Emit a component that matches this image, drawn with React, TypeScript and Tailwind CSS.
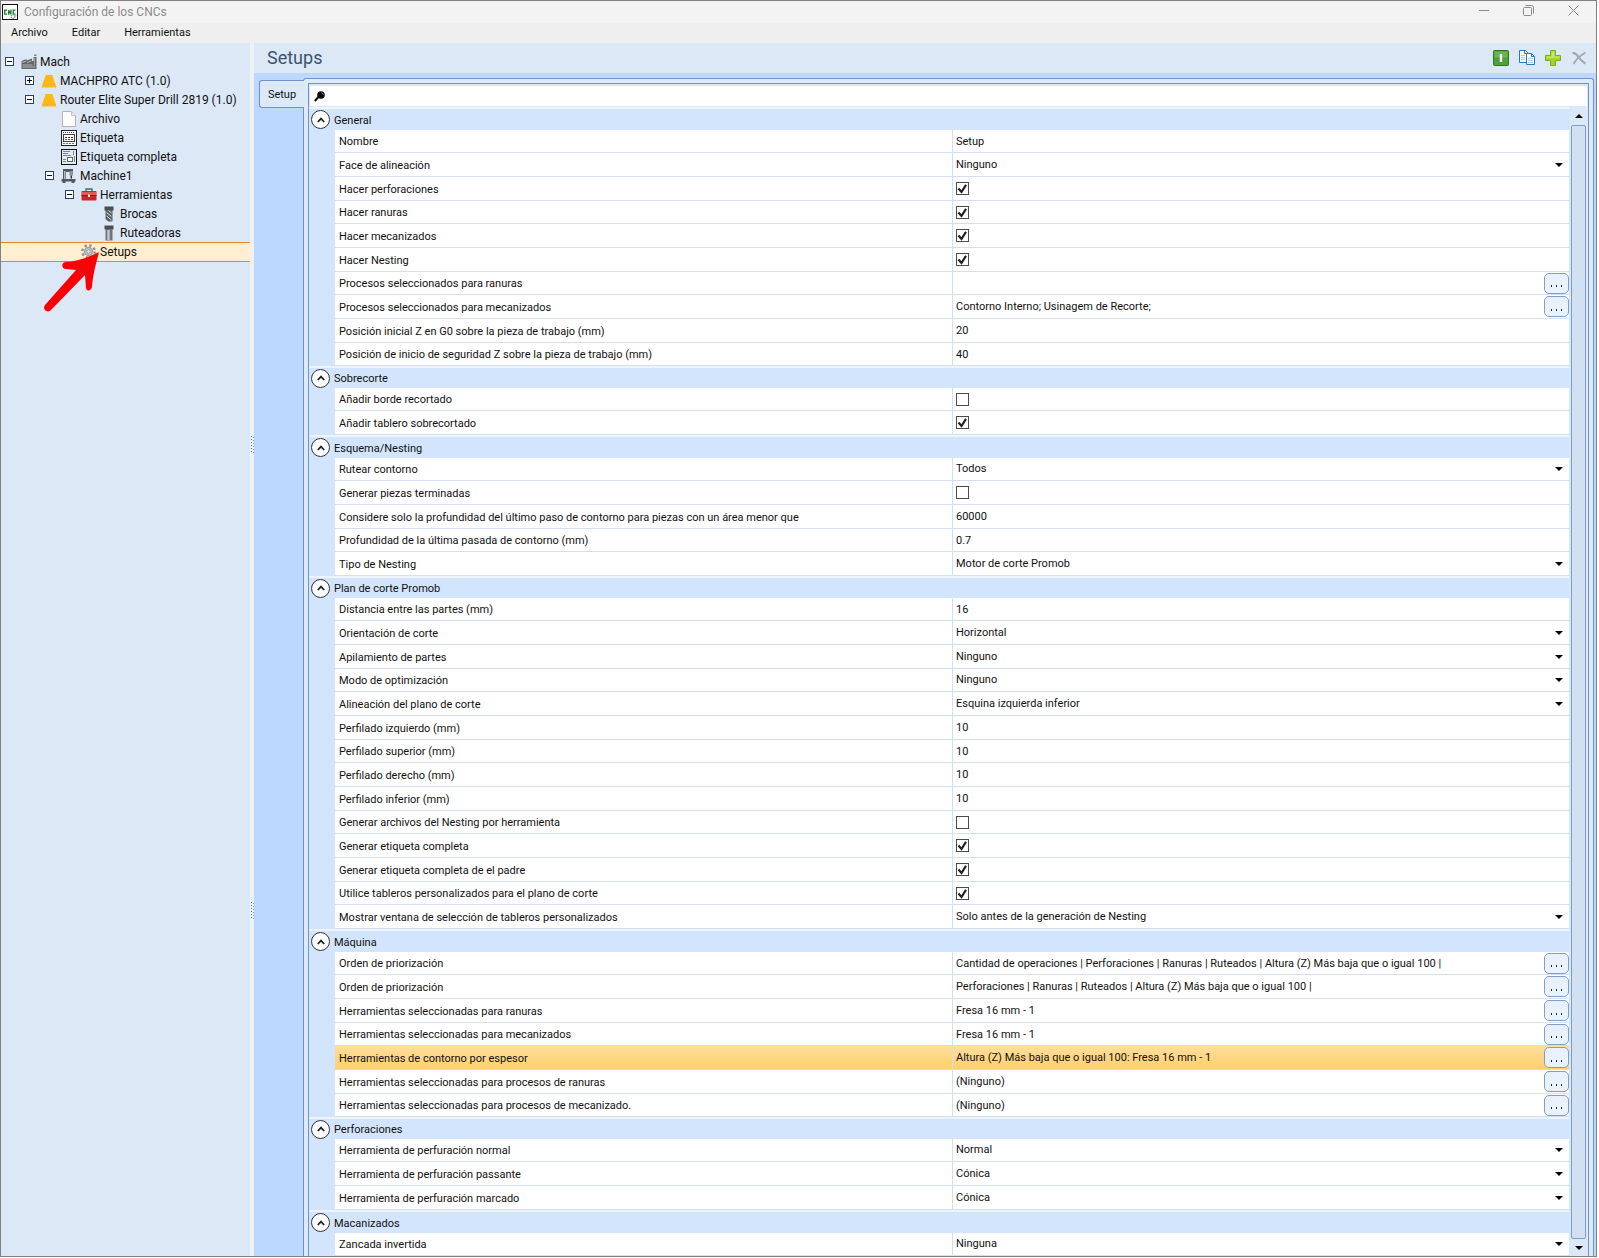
import React, { useState } from "react";

type Kind = "text" | "select" | "check" | "dots";
type Row = { label: string; kind: Kind; value?: string; on?: boolean; hot?: boolean };
type Group = { title: string; rows: Row[] };

const text = (label: string, value: string): Row => ({ label, kind: "text", value });
const pick = (label: string, value: string): Row => ({ label, kind: "select", value });
const check = (label: string, on: boolean): Row => ({ label, kind: "check", on });
const dots = (label: string, value: string, hot = false): Row => ({ label, kind: "dots", value, hot });

const groups: Group[] = [
  {
    title: "General",
    rows: [
      text("Nombre", "Setup"),
      pick("Face de alineación", "Ninguno"),
      check("Hacer perforaciones", true),
      check("Hacer ranuras", true),
      check("Hacer mecanizados", true),
      check("Hacer Nesting", true),
      dots("Procesos seleccionados para ranuras", ""),
      dots("Procesos seleccionados para mecanizados", "Contorno Interno; Usinagem de Recorte;"),
      text("Posición inicial Z en G0 sobre la pieza de trabajo (mm)", "20"),
      text("Posición de inicio de seguridad Z sobre la pieza de trabajo (mm)", "40"),
    ],
  },
  {
    title: "Sobrecorte",
    rows: [check("Añadir borde recortado", false), check("Añadir tablero sobrecortado", true)],
  },
  {
    title: "Esquema/Nesting",
    rows: [
      pick("Rutear contorno", "Todos"),
      check("Generar piezas terminadas", false),
      text("Considere solo la profundidad del último paso de contorno para piezas con un área menor que", "60000"),
      text("Profundidad de la última pasada de contorno (mm)", "0.7"),
      pick("Tipo de Nesting", "Motor de corte Promob"),
    ],
  },
  {
    title: "Plan de corte Promob",
    rows: [
      text("Distancia entre las partes (mm)", "16"),
      pick("Orientación de corte", "Horizontal"),
      pick("Apilamiento de partes", "Ninguno"),
      pick("Modo de optimización", "Ninguno"),
      pick("Alineación del plano de corte", "Esquina izquierda inferior"),
      text("Perfilado izquierdo (mm)", "10"),
      text("Perfilado superior (mm)", "10"),
      text("Perfilado derecho (mm)", "10"),
      text("Perfilado inferior (mm)", "10"),
      check("Generar archivos del Nesting por herramienta", false),
      check("Generar etiqueta completa", true),
      check("Generar etiqueta completa de el padre", true),
      check("Utilice tableros personalizados para el plano de corte", true),
      pick("Mostrar ventana de selección de tableros personalizados", "Solo antes de la generación de Nesting"),
    ],
  },
  {
    title: "Máquina",
    rows: [
      dots("Orden de priorización", "Cantidad de operaciones | Perforaciones | Ranuras | Ruteados | Altura (Z) Más baja que o igual 100 |"),
      dots("Orden de priorización", "Perforaciones | Ranuras | Ruteados | Altura (Z) Más baja que o igual 100 |"),
      dots("Herramientas seleccionadas para ranuras", "Fresa 16 mm - 1"),
      dots("Herramientas seleccionadas para mecanizados", "Fresa 16 mm - 1"),
      dots("Herramientas de contorno por espesor", "Altura (Z) Más baja que o igual 100: Fresa 16 mm - 1", true),
      dots("Herramientas seleccionadas para procesos de ranuras", "(Ninguno)"),
      dots("Herramientas seleccionadas para procesos de mecanizado.", "(Ninguno)"),
    ],
  },
  {
    title: "Perforaciones",
    rows: [
      pick("Herramienta de perfuración normal", "Normal"),
      pick("Herramienta de perfuración passante", "Cónica"),
      pick("Herramienta de perfuración marcado", "Cónica"),
    ],
  },
  { title: "Macanizados", rows: [pick("Zancada invertida", "Ninguna")] },
];

/* ---------- icons ---------- */

function AppIcon() {
  return (
    <svg className="size-4" viewBox="0 0 16 16" aria-hidden="true">
      <rect x="0.5" y="0.5" width="15" height="15" fill="#fff" stroke="#111" />
      <path d="M5 6.200H2.700v4H5M6.700 10.800V6.200l2.200 4V5.500M13.500 6.200h-2.300v4h2.300" fill="none" stroke="#1a7a2e" strokeWidth="1.300" />
      <circle cx="11" cy="12.500" r="1.800" fill="none" stroke="#8f9396" strokeWidth="1.400" strokeDasharray="1.200 0.600" />
      <circle cx="13.200" cy="11.800" r="1.200" fill="#b8bbbd" />
    </svg>
  );
}

function FactoryIcon() {
  return (
    <svg className="size-4" viewBox="0 0 16 16" aria-hidden="true">
      <path d="M0.500 15V7L5.500 5v1.500L11 4.500V7h1.500V3h3v12z" fill="#63676a" />
      <path d="M13 0.500h2.500V2H13z" fill="#85898c" />
      <path d="M1 8.500l4-1.500M6 8.500l4.500-1.500M1.500 11h10M1.500 13h13" stroke="#b4b8bb" />
      <path d="M13.500 3.500v8" stroke="#a0a4a7" />
    </svg>
  );
}

function ConeIcon() {
  return (
    <svg className="size-4" viewBox="0 0 16 16" aria-hidden="true">
      <path d="M4.500 2.500Q4.700 2 5.200 2h5.600Q11.300 2 11.500 2.500L15.500 14.500H0.500z" fill="#fdb813" />
    </svg>
  );
}

function PageIcon() {
  return (
    <svg className="size-4" viewBox="0 0 16 16" aria-hidden="true">
      <path d="M1.500 0.500h9L14.500 4.500v11h-13z" fill="#fcfcfc" stroke="#b3b5b8" />
      <path d="M10.500 0.500v4h4" fill="#e8e8e8" stroke="#c3c5c8" />
    </svg>
  );
}

function TagIcon() {
  return (
    <svg className="size-4" viewBox="0 0 16 16" aria-hidden="true">
      <rect x="0.500" y="0.500" width="15" height="15" fill="#fff" stroke="#222" />
      <path d="M2 2.500h12" stroke="#555" strokeWidth="1" strokeDasharray="1 1" />
      <path d="M2 13.500h12" stroke="#b85450" strokeWidth="1" strokeDasharray="2 1" />
      <rect x="2.500" y="4.500" width="11" height="7" fill="#fff" stroke="#444" />
      <path d="M4 7.500h8" stroke="#333" strokeWidth="1" strokeDasharray="2 1" />
      <path d="M4 9.500h8" stroke="#555" strokeWidth="1" strokeDasharray="2 1" />
    </svg>
  );
}

function FullTagIcon() {
  return (
    <svg className="size-4" viewBox="0 0 16 16" aria-hidden="true">
      <rect x="0.500" y="0.500" width="15" height="15" fill="#e3ebf2" stroke="#111" />
      <path d="M2 2.500h7M2 4.500h5M2 6.500h8M2 10.500h3M2 12.500h3M12.500 2v4" stroke="#7c8690" />
      <rect x="6.500" y="8.500" width="5" height="4" fill="#fff" stroke="#5d6871" />
      <path d="M13.500 7v6" stroke="#7c8690" />
    </svg>
  );
}

function MachineIcon() {
  return (
    <svg className="size-4" viewBox="0 0 16 16" aria-hidden="true">
      <path d="M2 1h10v3H5v8H2z" fill="#54585c" />
      <path d="M3 3h1.500v8H3z" fill="#b5babf" />
      <path d="M8.500 3h3.500v4.500H8.500z" fill="#8d9296" />
      <path d="M9.500 7.500h1.500V10.500h-1.500z" fill="#333" />
      <path d="M0.500 11h14v2.500h-14zM1.500 13.500h3V15h-3zM10.500 13.500h3V15h-3z" fill="#54585c" />
    </svg>
  );
}

function ToolboxIcon() {
  return (
    <svg className="size-4" viewBox="0 0 16 16" aria-hidden="true">
      <path d="M5 4.500V2h6v2.500" fill="none" stroke="#5b5f63" strokeWidth="1.300" />
      <rect x="0.500" y="4" width="15" height="9.500" rx="1" fill="#c62828" />
      <path d="M1 5h14v3H1z" fill="#e35a50" />
      <path d="M0.500 8.500h15" stroke="#8e1616" />
      <path d="M7 7.500h2v2.500H7z" fill="#f0f0f0" />
    </svg>
  );
}

function DrillIcon({ plain = false }: { plain?: boolean }) {
  return (
    <svg className="size-4" viewBox="0 0 16 16" aria-hidden="true">
      <path d="M3.500 0.500h9v4h-9z" fill="#4b4f53" />
      <path d={plain ? "M4.500 4h7v11.500h-7z" : "M4.500 4h7v11.500H7.500L4.500 13z"} fill={plain ? "#6f7478" : "#5b6064"} />
      {plain ? (
        <path d="M7.500 5v10" stroke="#bfc4c8" strokeWidth="2.500" />
      ) : (
        <path d="M5.500 6.500l5 4M5.500 10l5 4M7.500 4.500l3 2.500" stroke="#dfe3e6" />
      )}
    </svg>
  );
}

function GearIcon() {
  return (
    <svg className="size-4" viewBox="0 0 16 16" aria-hidden="true">
      <circle cx="7.500" cy="7.500" r="6.200" fill="none" stroke="#8f9397" strokeWidth="2.400" strokeDasharray="2.400 2.470" />
      <circle cx="7.500" cy="7.500" r="4" fill="#c9ccce" stroke="#9da1a5" strokeWidth="1.500" />
      <circle cx="7.500" cy="7.500" r="1.800" fill="#fdeccf" stroke="#8f9397" />
    </svg>
  );
}

function Expander({ open }: { open: boolean }) {
  return (
    <svg className="size-[9px]" viewBox="0 0 9 9" aria-hidden="true">
      <rect x="0.500" y="0.500" width="8" height="8" fill="#fff" stroke="#2b3f63" />
      <path d={open ? "M2 4.500h5" : "M2 4.500h5M4.500 2v5"} stroke="#111" />
    </svg>
  );
}

function SearchIcon() {
  return (
    <svg className="size-[11px]" viewBox="0 0 11 11" aria-hidden="true">
      <circle cx="7" cy="4" r="3.800" fill="#0a0a0a" />
      <path d="M0.800 10L4.500 6" stroke="#0a0a0a" strokeWidth="2" />
      <path d="M7.500 1.800a2 2 0 0 1 1.800 1.900" stroke="#8a9aa8" fill="none" />
    </svg>
  );
}

function Caret({ up = false }: { up?: boolean }) {
  return (
    <svg className="h-1 w-2" viewBox="0 0 8 4" aria-hidden="true">
      <path d={up ? "M0 4L4 0L8 4z" : "M0 0h8L4 4z"} fill="#000" />
    </svg>
  );
}

/* ---------- tree ---------- */

type Node = { label: string; icon: React.ReactNode; pad: string; open?: boolean; active?: boolean };

const nodes: Node[] = [
  { label: "Mach", icon: <FactoryIcon />, pad: "pl-1", open: true },
  { label: "MACHPRO ATC (1.0)", icon: <ConeIcon />, pad: "pl-6", open: false },
  { label: "Router Elite Super Drill 2819 (1.0)", icon: <ConeIcon />, pad: "pl-6", open: true },
  { label: "Archivo", icon: <PageIcon />, pad: "pl-11" },
  { label: "Etiqueta", icon: <TagIcon />, pad: "pl-11" },
  { label: "Etiqueta completa", icon: <FullTagIcon />, pad: "pl-11" },
  { label: "Machine1", icon: <MachineIcon />, pad: "pl-11", open: true },
  { label: "Herramientas", icon: <ToolboxIcon />, pad: "pl-16", open: true },
  { label: "Brocas", icon: <DrillIcon />, pad: "pl-21" },
  { label: "Ruteadoras", icon: <DrillIcon plain />, pad: "pl-21" },
  { label: "Setups", icon: <GearIcon />, pad: "pl-16", active: true },
];

function Tree() {
  return (
    <nav aria-label="CNCs" className="relative w-[249px] shrink-0 bg-[#dce8f6] pt-[9px]">
      <ul>
        {nodes.map((n) => (
          <li
            key={n.label}
            className={
              n.active
                ? "h-5 border-y border-[#e08a2c] bg-[#ffefd0]"
                : "h-[19px]"
            }
          >
            <button className={`flex h-full w-full items-center whitespace-nowrap text-left text-xs ${n.pad}`}>
              <span className="w-4 shrink-0">{n.open !== undefined && <Expander open={n.open} />}</span>
              <span className="mr-[3px] shrink-0">{n.icon}</span>
              {n.label}
            </button>
          </li>
        ))}
      </ul>
      <svg className="pointer-events-none absolute left-[41px] top-[207px] h-[64px] w-[60px]" viewBox="0 0 60 64" aria-hidden="true">
        <path
          d="M57 2C47 7 34 12 24 12c-5 0-5 7 0 7l10 1L3 55c-3 4 2 9 6 5L43 25l1 13c1 4 5 3 6-1C51 24 54 14 57 2z"
          fill="#fb0007"
        />
      </svg>
    </nav>
  );
}

/* ---------- property grid ---------- */

function ValueCell({ row, id }: { row: Row; id: string }) {
  const [on, setOn] = useState(!!row.on);
  if (row.kind === "check") {
    return (
      <span className="relative ml-[3px] block size-[13px]">
        <input
          id={id}
          type="checkbox"
          checked={on}
          onChange={() => setOn(!on)}
          className="block size-[13px] appearance-none border border-[#4c4c4c] bg-white"
        />
        {on && (
          <svg className="pointer-events-none absolute inset-0 size-[13px]" viewBox="0 0 13 13" aria-hidden="true">
            <path d="M2.500 6.500L5.500 10L10 2.800" fill="none" stroke="#222" strokeWidth="2.200" />
          </svg>
        )}
      </span>
    );
  }
  if (row.kind === "select") {
    return (
      <span className="relative flex items-center">
        <select id={id} defaultValue={row.value} className="h-5 w-full appearance-none bg-transparent pl-[3px] pr-6 outline-none">
          <option>{row.value}</option>
        </select>
        <span className="pointer-events-none absolute right-[6px]">
          <Caret />
        </span>
      </span>
    );
  }
  return (
    <span className="flex items-center">
      <input id={id} type="text" defaultValue={row.value} className="h-5 min-w-0 grow bg-transparent pl-[3px] outline-none" />
      {row.kind === "dots" && (
        <button
          aria-label={`Editar ${row.label}`}
          className="flex h-[21px] w-[25px] shrink-0 items-center justify-center gap-1 rounded-[5px] border border-[#7f9ccb] bg-[#e9f1fd] pt-1.5"
        >
          <i className="h-[2px] w-[1px] bg-[#222]" />
          <i className="h-[2px] w-[1px] bg-[#222]" />
          <i className="h-[2px] w-[1px] bg-[#222]" />
        </button>
      )}
    </span>
  );
}

function GroupBody({ group, index }: { group: Group; index: number }) {
  const [open, setOpen] = useState(true);
  return (
    <tbody className="group">
      <tr className="h-[23px] group-odd:h-[22px]">
        <th colSpan={3} className="border-t-2 border-[#edf4fe] bg-[#d3e5fc] p-0 text-left font-normal">
          <div className="flex h-5 items-center gap-1 pl-[2px]">
            <button
              aria-label={`Contraer ${group.title}`}
              aria-expanded={open}
              onClick={() => setOpen(!open)}
              className="relative z-10 -my-1 flex size-[19px] shrink-0 items-center justify-center rounded-full border border-[#333] bg-white"
            >
              <svg className="h-[6px] w-2" viewBox="0 0 8 6" aria-hidden="true">
                <path d="M0.800 5L4 1.600L7.200 5" fill="none" stroke="#222" strokeWidth="1.800" />
              </svg>
            </button>
            <span className="pt-0.5">{group.title}</span>
          </div>
        </th>
      </tr>
      {open &&
        group.rows.map((row, i) => {
          const id = `p-${index}-${i}`;
          return (
            <tr key={id} className="h-6 nth-[3n+2]:h-[23px]">
              <td className="bg-[#d3e5fc] p-0" />
              <td
                className={
                  row.hot
                    ? "border-b border-[#d3dff0] bg-linear-to-b from-[#ffdf9b] to-[#ffcf6b] p-0"
                    : "border-b border-[#d3dff0] bg-white p-0"
                }
              >
                <label htmlFor={id} className="block truncate pt-0.5 pl-1">
                  {row.label}
                </label>
              </td>
              <td
                className={
                  row.hot
                    ? "border-b border-l border-[#d3dff0] bg-linear-to-b from-[#ffdf9b] to-[#ffcf6b] p-0"
                    : "border-b border-l border-[#d3dff0] bg-white p-0"
                }
              >
                <ValueCell row={row} id={id} />
              </td>
            </tr>
          );
        })}
    </tbody>
  );
}

function Grip() {
  return (
    <span className="grid grid-cols-2 gap-[1px]" aria-hidden="true">
      {Array.from({ length: 12 }, (_, i) => (
        <i key={i} className="size-[1px] odd:bg-[#5b6f8c] even:mt-[1px] even:bg-[#8296b3]" />
      ))}
    </span>
  );
}

export default function App() {
  return (
    <div className="min-h-screen bg-white pr-[2px] pb-[1px] font-['Roboto','Noto_Sans',sans-serif] text-[11px] leading-4 text-[#111]">
      <div className="flex min-h-[calc(100vh-1px)] flex-col border border-[#808080] bg-[#efefef]">
        <header className="flex h-[22px] items-center bg-[#f3f3f3] pl-[1px] text-[#8c8c8c]">
          <AppIcon />
          <h1 className="grow pl-1.5 text-xs font-normal">Configuración de los CNCs</h1>
          <div className="flex self-start">
            <button aria-label="Minimizar" className="flex h-[19px] w-[45px] items-center justify-center">
              <svg className="size-[10px]" viewBox="0 0 10 10">
                <path d="M0 4.500h10" stroke="#8a8a8a" />
              </svg>
            </button>
            <button aria-label="Restaurar" className="flex h-[19px] w-[45px] items-center justify-center">
              <svg className="size-[11px]" viewBox="0 0 11 11" fill="none" stroke="#8a8a8a">
                <rect x="0.500" y="2.500" width="8" height="8" rx="1" />
                <path d="M2.500 0.500h6a2 2 0 0 1 2 2v6" />
              </svg>
            </button>
            <button aria-label="Cerrar" className="flex h-[19px] w-[45px] items-center justify-center">
              <svg className="size-[11px]" viewBox="0 0 11 11">
                <path d="M0.500 0.500l10 10M10.500 0.500l-10 10" stroke="#8a8a8a" />
              </svg>
            </button>
          </div>
        </header>
        <menu className="flex h-5 items-center gap-6 pl-[10px]">
          <li>
            <button>Archivo</button>
          </li>
          <li>
            <button>Editar</button>
          </li>
          <li>
            <button>Herramientas</button>
          </li>
        </menu>

        <div className="flex grow">
          <Tree />
          <div className="flex w-1 shrink-0 flex-col items-center bg-[#eef1f5]">
            <span className="grow-7" />
            <Grip />
            <span className="grow-8" />
            <Grip />
            <span className="grow-6" />
          </div>

          <main className="flex min-w-0 grow flex-col bg-[#bcd8ff]">
            <div className="flex h-[30px] items-center gap-[10px] bg-[#dce8f6] pl-[13px] pr-[9px]">
              <h2 className="grow text-lg text-[#3d5270]">Setups</h2>
              <button aria-label="Activar">
                <svg className="size-4" viewBox="0 0 16 16">
                  <rect x="0.500" y="0.500" width="15" height="15" rx="1" fill="#4fa03a" stroke="#2f7423" />
                  <path d="M1.500 1.500h13v6h-13z" fill="#6ab54f" />
                  <path d="M8 4v8" stroke="#fff" strokeWidth="2.400" />
                </svg>
              </button>
              <button aria-label="Copiar">
                <svg className="size-4" viewBox="0 0 16 16" fill="#fff" stroke="#2c78b5">
                  <path d="M0.500 0.500h6l2 2v10h-8z" />
                  <path d="M5.500 0.500v3h3" fill="none" />
                  <path d="M2 5.500h4M2 7.500h4M2 9.500h4" stroke="#a9cbe6" />
                  <path d="M7.500 3.500h5l3 3v8h-8z" />
                  <path d="M12.500 3.500v3h3" fill="none" />
                  <path d="M9 8.500h5M9 10.500h5M9 12.500h5" stroke="#a9cbe6" />
                </svg>
              </button>
              <button aria-label="Añadir">
                <svg className="size-4" viewBox="0 0 16 16">
                  <path d="M5.500 0.500h5v5h5v5h-5v5h-5v-5h-5v-5h5z" fill="#a5d52a" stroke="#7cab1e" />
                  <path d="M6.500 1.500h3v5h5v1.500h-13V6.500h5z" fill="#c4e85c" />
                </svg>
              </button>
              <button aria-label="Eliminar">
                <svg className="size-4" viewBox="0 0 16 16">
                  <path d="M1.500 3.500C3.500 2.500 5 3.500 7 6.500C9.500 9.500 11.500 12 14.500 13.500" fill="none" stroke="#a3a8ad" strokeWidth="2.200" />
                  <path d="M14.500 2.500C9.500 5.500 5 9 2.500 14" fill="none" stroke="#a3a8ad" strokeWidth="1.800" />
                </svg>
              </button>
            </div>

            <div className="flex grow pl-[5px] pt-[5px] pr-[2px]">
              <div role="tablist" className="z-10 -mr-[1px] w-[45px] shrink-0 pt-[2px]">
                <button
                  role="tab"
                  aria-selected="true"
                  className="flex h-7 w-full items-center justify-center rounded-l-[3px] border border-r-0 border-[#7093c9] bg-[#dce9f9] pt-0.5"
                >
                  Setup
                </button>
              </div>
              <section className="flex min-w-0 grow flex-col rounded-t-[3px] border border-b-0 border-[#7093c9] bg-[#dceafb] px-1 pt-1">
                <div className="flex grow flex-col border border-b-0 border-[#7093c9] bg-[#d8e8fc]">
                  <label className="mt-[2px] mr-[1px] mb-[1px] ml-[1px] flex h-5 items-center bg-white pl-[4px]">
                    <SearchIcon />
                    <input type="search" aria-label="Buscar" className="h-5 grow bg-transparent px-2 outline-none" />
                  </label>
                  <div className="flex grow gap-[2px]">
                    <div className="min-w-0 grow">
                      <table className="w-full table-fixed border-separate border-spacing-0">
                        <colgroup>
                          <col className="w-[26px]" />
                          <col />
                          <col />
                        </colgroup>
                        {groups.map((g, i) => (
                          <GroupBody key={g.title} group={g} index={i} />
                        ))}
                      </table>
                    </div>
                    <div className="flex w-[17px] shrink-0 flex-col items-center bg-[#dbe8f8] pr-[2px]">
                      <button aria-label="Subir" className="flex h-[18px] w-full items-center justify-center">
                        <Caret up />
                      </button>
                      <div className="w-[15px] grow rounded-[2px] border border-[#7f9ccb] bg-[#d2e1f2]" />
                      <button aria-label="Bajar" className="flex h-[17px] w-full items-center justify-center">
                        <Caret />
                      </button>
                    </div>
                  </div>
                </div>
              </section>
            </div>
          </main>
        </div>
      </div>
    </div>
  );
}
